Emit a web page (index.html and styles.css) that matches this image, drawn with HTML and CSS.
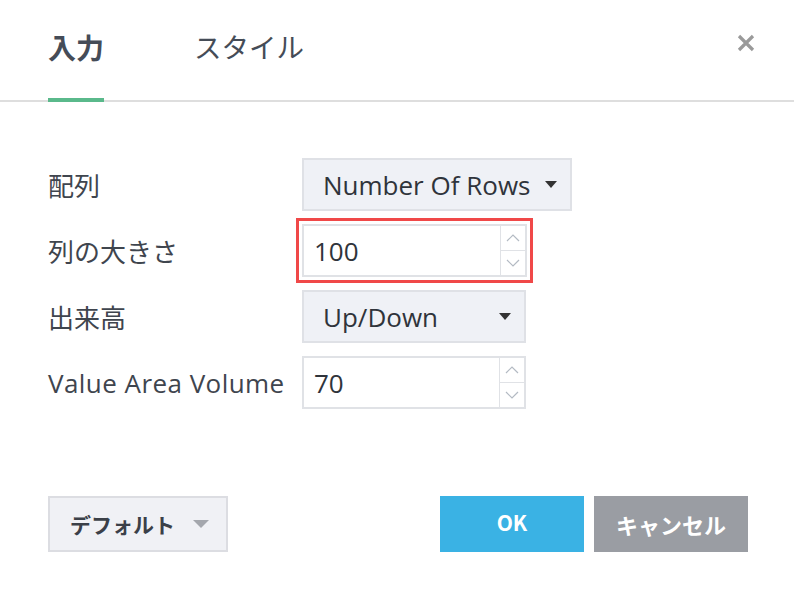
FILE: index.html
```html
<!DOCTYPE html>
<html lang="ja">
<head>
<meta charset="utf-8">
<link rel="stylesheet" href="styles.css">
</head>
<body>
<div class="dialog">
  <div class="tabs">
    <div class="tab active">入力</div>
    <div class="tab">スタイル</div>
    <div class="close">
      <svg width="20" height="20" viewBox="0 0 20 20"><path d="M3 3 L17 17 M17 3 L3 17" stroke="#9a9a9a" stroke-width="3.2" fill="none"/></svg>
    </div>
  </div>
  <div class="form">
    <div class="label">配列</div>
    <div class="control"><div class="select w270"><span>Number Of Rows</span><i class="caret"></i></div></div>
    <div class="label">列の大きさ</div>
    <div class="control"><div class="number focused w225"><span class="val">100</span><div class="spin"><div class="up"><svg width="14" height="8" viewBox="0 0 14 8"><path d="M1 7 L7 1 L13 7" stroke="#b3bac3" stroke-width="1.2" fill="none"/></svg></div><div class="down"><svg width="14" height="8" viewBox="0 0 14 8"><path d="M1 1 L7 7 L13 1" stroke="#b3bac3" stroke-width="1.2" fill="none"/></svg></div></div></div></div>
    <div class="label">出来高</div>
    <div class="control"><div class="select w224"><span>Up/Down</span><i class="caret"></i></div></div>
    <div class="label latin">Value Area Volume</div>
    <div class="control"><div class="number w224"><span class="val">70</span><div class="spin"><div class="up"><svg width="14" height="8" viewBox="0 0 14 8"><path d="M1 7 L7 1 L13 7" stroke="#b3bac3" stroke-width="1.2" fill="none"/></svg></div><div class="down"><svg width="14" height="8" viewBox="0 0 14 8"><path d="M1 1 L7 7 L13 1" stroke="#b3bac3" stroke-width="1.2" fill="none"/></svg></div></div></div></div>
  </div>
  <div class="footer">
    <div class="btn default"><span>デフォルト</span><i class="caret light"></i></div>
    <div class="spacer"></div>
    <div class="btn ok">OK</div>
    <div class="btn cancel">キャンセル</div>
  </div>
</div>
</body>
</html>
```

FILE: styles.css
```css
html, body {
  margin: 0;
  padding: 0;
  background: #ffffff;
}
body {
  font-family: "Open Sans", "Noto Sans CJK JP", sans-serif;
  color: #40464f;
}
.dialog {
  width: 794px;
  height: 598px;
  box-sizing: border-box;
}
.tabs {
  height: 102px;
  box-sizing: border-box;
  border-bottom: 2px solid #dedede;
  display: flex;
  align-items: stretch;
  padding-left: 48px;
  padding-right: 38px;
}
.tab {
  font-size: 27.5px;
  line-height: 1;
  padding-top: 33px;
  box-sizing: border-box;
  color: #454c57;
  margin-right: 90px;
  position: relative;
  font-family: "Noto Sans CJK JP", sans-serif;
}
.tab.active {
  font-weight: 700;
  font-size: 28px;
}
.tab.active::after {
  content: "";
  position: absolute;
  left: 0;
  right: 0;
  bottom: -2px;
  height: 4px;
  background: #5ab98b;
}
.close {
  margin-left: auto;
  padding-top: 33px;
}
.form {
  margin-top: 56px;
  padding-left: 48px;
  display: grid;
  grid-template-columns: 254px auto;
  grid-auto-rows: 53px;
  row-gap: 13px;
  align-items: center;
}
.label {
  font-size: 26px;
  color: #3f454e;
  white-space: nowrap;
}
.label.latin {
  letter-spacing: 0.45px;
}
.control {
  height: 53px;
  display: flex;
}
.w270 { width: 270px; }
.w225 { width: 225px; }
.w224 { width: 224px; }
.select {
  box-sizing: border-box;
  height: 53px;
  background: #eff1f6;
  border: 2px solid #dfe1e6;
  display: flex;
  align-items: center;
  padding-left: 19px;
  padding-right: 13px;
  font-size: 26px;
  color: #2f343b;
}
.select span {
  flex: 1;
}
.caret {
  display: block;
  width: 0;
  height: 0;
  border-left: 6px solid transparent;
  border-right: 6px solid transparent;
  border-top: 7px solid #333;
}
.caret.light {
  border-top-color: #a4a7ad;
  border-left-width: 8px;
  border-right-width: 8px;
  border-top-width: 8px;
}
.number {
  box-sizing: border-box;
  height: 53px;
  border: 2px solid #e0e2e6;
  display: flex;
  align-items: stretch;
  background: #fff;
}
.number.focused {
  outline: 3px solid #f04848;
  outline-offset: 3px;
}
.val {
  flex: 1;
  display: flex;
  align-items: center;
  padding-left: 10px;
  font-size: 26px;
  color: #2f343b;
}
.spin {
  width: 24px;
  border-left: 1px solid #e0e2e6;
  display: flex;
  flex-direction: column;
}
.spin .up, .spin .down {
  flex: 1;
  display: flex;
  align-items: center;
  justify-content: center;
}
.spin .up {
  border-bottom: 1px solid #e0e2e6;
}
.footer {
  margin-top: 87px;
  display: flex;
  padding-left: 48px;
  padding-right: 46px;
  gap: 10px;
}
.spacer {
  flex: 1;
}
.btn {
  height: 56px;
  box-sizing: border-box;
  display: flex;
  align-items: center;
  justify-content: center;
  font-family: "Noto Sans CJK JP", sans-serif;
  font-weight: 700;
  font-size: 21px;
}
.btn.default {
  width: 180px;
  background: #f0f1f5;
  border: 2px solid #dcdde2;
  color: #3b4048;
  justify-content: flex-start;
  padding-left: 20px;
  gap: 18px;
}
.btn.ok {
  width: 144px;
  background: #3ab2e4;
  color: #fff;
  padding-bottom: 4px;
}
.btn.cancel {
  width: 154px;
  background: #9a9da3;
  color: #fff;
  font-size: 22px;
}
```
